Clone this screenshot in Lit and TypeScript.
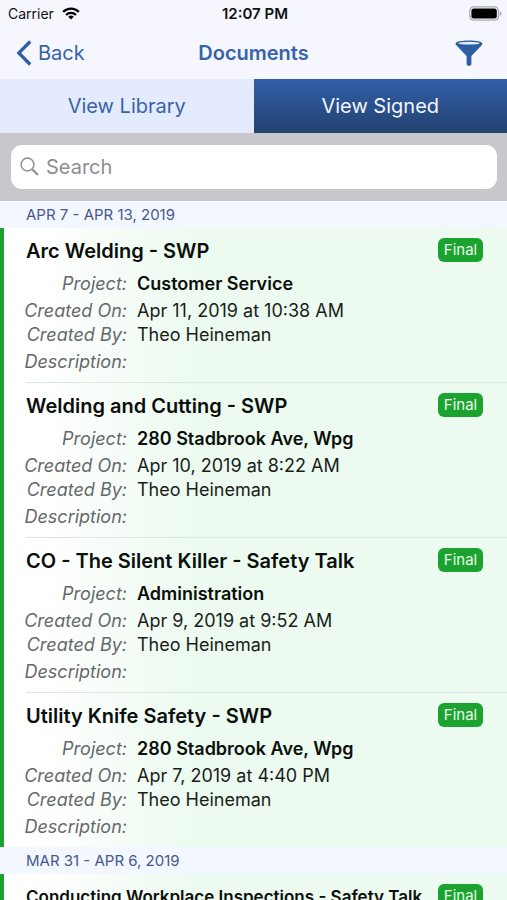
import { LitElement, html, css, svg } from "lit";
import { customElement, property, state } from "lit/decorators.js";
import { classMap } from "lit/directives/class-map.js";

interface DocumentEntry {
  title: string;
  project?: string;
  createdOn?: string;
  createdBy?: string;
}

interface Week {
  label: string;
  documents: DocumentEntry[];
}

// Titles longer than this are set smaller so that they stay on one line.
const LONG_TITLE = 40;

const weeks: Week[] = [
  {
    label: "APR 7 - APR 13, 2019",
    documents: [
      { title: "Arc Welding - SWP", project: "Customer Service", createdOn: "Apr 11, 2019 at 10:38 AM", createdBy: "Theo Heineman" },
      { title: "Welding and Cutting - SWP", project: "280 Stadbrook Ave, Wpg", createdOn: "Apr 10, 2019 at 8:22 AM", createdBy: "Theo Heineman" },
      { title: "CO - The Silent Killer - Safety Talk", project: "Administration", createdOn: "Apr 9, 2019 at 9:52 AM", createdBy: "Theo Heineman" },
      { title: "Utility Knife Safety - SWP", project: "280 Stadbrook Ave, Wpg", createdOn: "Apr 7, 2019 at 4:40 PM", createdBy: "Theo Heineman" },
    ],
  },
  {
    label: "MAR 31 - APR 6, 2019",
    documents: [{ title: "Conducting Workplace Inspections - Safety Talk" }],
  },
];

const wifiIcon = svg`<svg width="18" height="13" viewBox="0 0 18 13" aria-hidden="true">
  <path d="M1.2 4.9a11 11 0 0 1 15.6 0" fill="none" stroke="#000" stroke-width="2.3"/>
  <path d="M4 7.9a7.1 7.1 0 0 1 10 0" fill="none" stroke="#000" stroke-width="2.1"/>
  <path d="M9 12.6 6.2 9.8a4 4 0 0 1 5.6 0z" fill="#000"/>
</svg>`;

const batteryIcon = svg`<svg width="33" height="15" viewBox="0 0 33 15" role="img" aria-label="Battery full">
  <rect x="0.8" y="0.8" width="28.6" height="13.4" rx="4" fill="none" stroke="#a9aaae" stroke-width="1.2"/>
  <rect x="2.4" y="2.4" width="25.4" height="10.2" rx="2.4" fill="#000"/>
  <path d="M30.8 5v5c1-.3 1.700-1.300 1.700-2.500S31.800 5.300 30.800 5z" fill="#a9aaae"/>
</svg>`;

const chevronIcon = svg`<svg width="16" height="26" viewBox="0 0 16 26" aria-hidden="true">
  <path d="M14.200 1.500 2.800 13l11.400 11.500" fill="none" stroke="#2d5da3" stroke-width="3.200"/>
</svg>`;

const funnelIcon = svg`<svg width="28" height="27" viewBox="0 0 28 27" aria-hidden="true">
  <path d="M.6 3.400C.6 1.500 6.500.5 14 .5s13.400 1 13.400 2.900c0 .9-.4 1.600-1.200 2.400L16.400 16v8.200c0 .9-1 1.500-2.400 1.500s-2.400-.6-2.400-1.500V16L1.800 5.800C1 5 .6 4.300.6 3.400z" fill="#2d5da3"/>
  <ellipse cx="14" cy="3.200" rx="10.800" ry="1.400" fill="#e6ecf9"/>
</svg>`;

const searchIcon = svg`<svg width="20" height="20" viewBox="0 0 20 20" aria-hidden="true">
  <circle cx="7.500" cy="7.500" r="6.400" fill="none" stroke="#8e8e93" stroke-width="1.500"/>
  <path d="M12.200 12.200 18 18" stroke="#8e8e93" stroke-width="2"/>
</svg>`;

@customElement("document-row")
export class DocumentRow extends LitElement {
  @property({ attribute: false }) entry!: DocumentEntry;

  static styles = css`
    :host {
      display: block;
      background: linear-gradient(to right, #ffffff 8%, #ecfaef 38%);
      border-left: 4px solid #1ca32f;
      padding-left: 22px;
    }
    .body {
      padding: 10px 0 5px;
    }
    :host([divided]) .body {
      border-bottom: 1px solid #dbe8e2;
    }
    .head {
      display: flex;
      align-items: flex-start;
      justify-content: space-between;
      gap: 8px;
      padding-right: 24px;
      margin-bottom: 5px;
    }
    .title {
      margin: 0;
      font-size: 20px;
      line-height: 26px;
      font-weight: 600;
      color: #0b0f0c;
    }
    .long {
      font-size: 17px;
    }
    .badge {
      flex: none;
      box-sizing: border-box;
      width: 45px;
      border-radius: 6px;
      background: #1ca32f;
      color: #e9fbec;
      font-size: 15px;
      line-height: 24px;
      text-align: center;
    }
    .facts {
      display: grid;
      grid-template-columns: 101px 1fr;
      grid-template-rows: 30px 24px 24px 30px;
      column-gap: 10px;
      align-items: center;
      margin: 0;
      font-size: 18px;
      line-height: 24px;
    }
    .label {
      justify-self: end;
      font-style: italic;
      color: #66696a;
      white-space: nowrap;
    }
    .value {
      margin: 0;
      color: #1a1e1b;
    }
    .strong {
      font-weight: 600;
      color: #0b0f0c;
    }
  `;

  render() {
    const { title, project, createdOn, createdBy } = this.entry;
    return html`
      <div class="body">
        <div class="head">
          <h3 class=${classMap({ title: true, long: title.length > LONG_TITLE })}>${title}</h3>
          <span class="badge">Final</span>
        </div>
        ${project
          ? html`<dl class="facts">
              <dt class="label">Project:</dt>
              <dd class="value strong">${project}</dd>
              <dt class="label">Created On:</dt>
              <dd class="value">${createdOn}</dd>
              <dt class="label">Created By:</dt>
              <dd class="value">${createdBy}</dd>
              <dt class="label">Description:</dt>
              <dd class="value"></dd>
            </dl>`
          : null}
      </div>
    `;
  }
}

@customElement("app-root")
export class AppRoot extends LitElement {
  @state() private tab: "library" | "signed" = "signed";

  static styles = css`
    :host {
      display: flex;
      flex-direction: column;
      height: 100vh;
      overflow: hidden;
      background: #f6f7fe;
      font-family: Inter, "Liberation Sans", sans-serif;
    }
    button {
      border: 0;
      padding: 0;
      background: none;
      font: inherit;
      color: inherit;
      cursor: pointer;
    }
    svg {
      display: block;
    }
    .status,
    .nav {
      display: grid;
      grid-template-columns: 1fr auto 1fr;
      align-items: center;
    }
    .status {
      height: 27px;
      padding: 0 5px 0 8px;
      font-size: 14px;
      color: #111;
    }
    .carrier {
      display: flex;
      align-items: center;
      gap: 8px;
    }
    .time {
      font-size: 15px;
      font-weight: 600;
    }
    .end {
      justify-self: end;
    }
    .nav {
      height: 52px;
      padding: 0 16px;
      font-size: 20px;
      color: #3763a8;
    }
    .back {
      display: flex;
      align-items: center;
      justify-self: start;
      gap: 6px;
    }
    .filter {
      justify-self: end;
      padding: 0 8px;
    }
    .heading {
      margin: 0;
      font-size: 20px;
      font-weight: 600;
    }
    .tabs {
      display: grid;
      grid-template-columns: 1fr 1fr;
      flex: none;
      height: 54px;
      font-size: 20px;
    }
    .tab {
      background: #e4ebfe;
      color: #3763a8;
    }
    .active {
      background: linear-gradient(#315fa8, #23426f);
      color: #f2f6fd;
    }
    .search {
      flex: none;
      padding: 12px 10px 12px 11px;
      background: #c8c7cc;
    }
    .field {
      display: flex;
      align-items: center;
      gap: 6px;
      height: 44px;
      padding: 0 9px;
      border-radius: 11px;
      background: #fff;
    }
    .input {
      flex: 1;
      min-width: 0;
      border: 0;
      outline: 0;
      padding: 0;
      background: none;
      font: inherit;
      font-size: 20px;
      color: #111;
    }
    .input::placeholder {
      color: #8e8e93;
      opacity: 1;
    }
    .list {
      flex: 1;
      min-height: 0;
      overflow-y: auto;
      scrollbar-width: none;
    }
    .week {
      margin: 0;
      padding-left: 26px;
      background: #f3f7ff;
      color: #47598c;
      font-size: 15px;
      line-height: 27px;
      font-weight: 400;
    }
  `;

  private renderTab(id: "library" | "signed", label: string) {
    return html`<button
      class=${classMap({ tab: true, active: this.tab === id })}
      role="tab"
      aria-selected=${this.tab === id}
      @click=${() => (this.tab = id)}
    >${label}</button>`;
  }

  render() {
    return html`
      <div class="status">
        <span class="carrier">Carrier ${wifiIcon}</span>
        <span class="time">12:07 PM</span>
        <span class="end">${batteryIcon}</span>
      </div>
      <header class="nav">
        <button class="back">${chevronIcon}<span>Back</span></button>
        <h1 class="heading">Documents</h1>
        <button class="filter" aria-label="Filter">${funnelIcon}</button>
      </header>
      <div class="tabs" role="tablist">
        ${this.renderTab("library", "View Library")}
        ${this.renderTab("signed", "View Signed")}
      </div>
      <div class="search">
        <label class="field">
          ${searchIcon}
          <input class="input" type="text" placeholder="Search" aria-label="Search" />
        </label>
      </div>
      <main class="list">
        ${weeks.map(
          (week) => html`
            <section>
              <h2 class="week">${week.label}</h2>
              ${week.documents.map(
                (entry, i) => html`<document-row
                  .entry=${entry}
                  ?divided=${i < week.documents.length - 1}
                ></document-row>`
              )}
            </section>
          `
        )}
      </main>
    `;
  }
}
